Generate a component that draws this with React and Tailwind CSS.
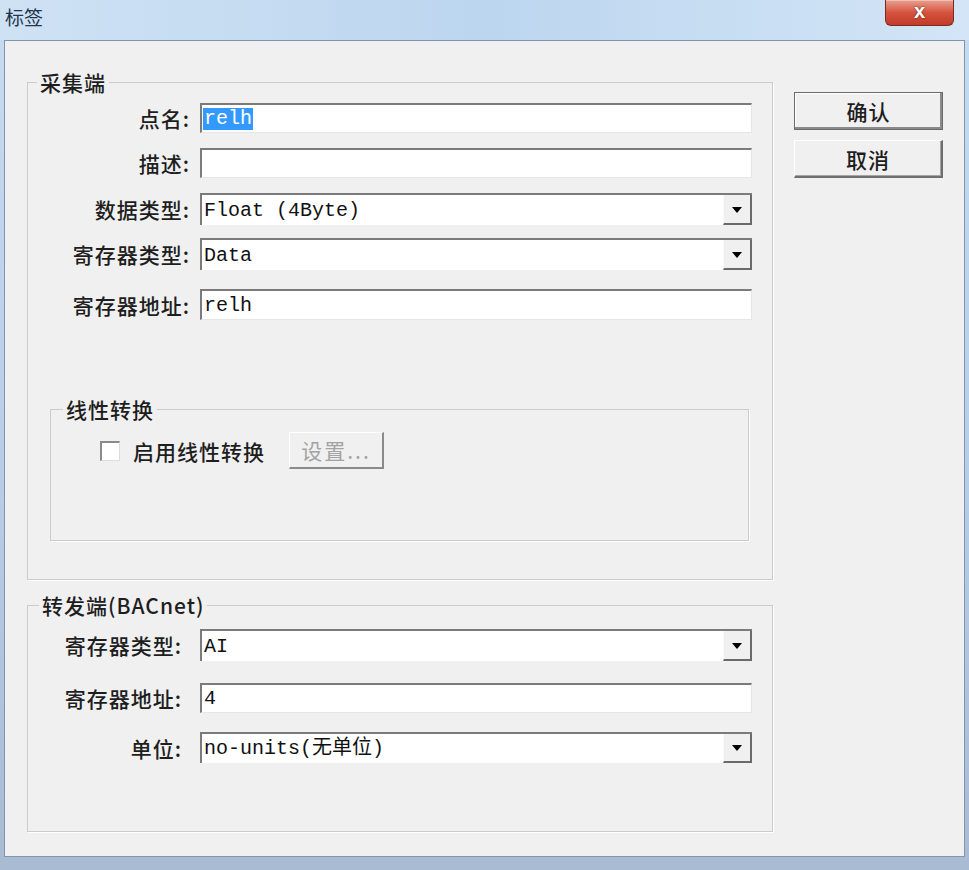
import React from "react";

const cjk = "font-['Noto_Sans_CJK_SC',sans-serif]";
const mono = "font-['Liberation_Mono','Noto_Sans_CJK_SC',monospace]";

// sunken edit box
const Edit = ({ value, selected, h = "h-[30px]" }) => (
  <div
    className={`${h} w-[552px] flex items-center bg-white border-t-2 border-l-2 border-t-[#7b7b7b] border-l-[#7b7b7b] border-r border-b border-r-[#e6e6e6] border-b-[#e6e6e6] pl-[1px] pt-[1px] text-[20px] leading-[24px] text-[#111] ${mono}`}
  >
    {selected ? (
      <span className="bg-[#3399ff] text-white px-[1px] leading-[22px]">{value}</span>
    ) : (
      <span className="px-[1px] whitespace-nowrap">{value}</span>
    )}
  </div>
);

// combo box with drop arrow
const Combo = ({ value, h = "h-[32px]" }) => (
  <div
    className={`${h} w-[552px] flex bg-white border-t-2 border-l-2 border-t-[#7b7b7b] border-l-[#7b7b7b] text-[20px] leading-[24px] text-[#111] ${mono}`}
  >
    <div className="flex-1 flex items-center pl-[2px] pt-[1px] whitespace-nowrap">{value}</div>
    <div className="w-[29px] flex items-center justify-center bg-[#f0f0f0] border-l border-l-[#fafafa] border-r-2 border-b-2 border-r-[#6a6a6a] border-b-[#6a6a6a]">
      <div className="w-0 h-0 border-x-[5px] border-x-transparent border-t-[6px] border-t-black mt-[1px]" />
    </div>
  </div>
);

const Row = ({ label, labelW = "w-[150px]", pr = "pr-[10px]", mt, children }) => (
  <div className={`flex items-center ${mt}`}>
    <div className={`${labelW} ${pr} text-right text-[21px] leading-[24px] tracking-[1px] font-medium text-[#1e1e1e] whitespace-nowrap ${cjk}`}>
      {label}
    </div>
    {children}
  </div>
);

const Group = ({ title, legendMl = "ml-[9px]", className, children }) => (
  <fieldset className={`border border-[#cbcbcb] shadow-[1px_1px_0_#ffffff] p-0 m-0 ${className}`}>
    <legend className={`${legendMl} px-[3px] text-[21px] tracking-[1px] leading-[20px] font-medium text-[#1e1e1e] ${cjk}`}>
      {title}
    </legend>
    {children}
  </fieldset>
);

const App = () => {
  return (
    <div className={`w-[969px] h-[870px] bg-gradient-to-b from-[#c6dcf1] via-[#b9cfe9] to-[#a9bbd3] overflow-hidden leading-[24px] ${cjk}`}>
      {/* title bar */}
      <div className="h-[40px] flex items-start justify-between bg-gradient-to-r from-[#cfe2f4] via-[#bcd6ef] to-[#d3e5f6]">
        <div className="pl-[5px] pt-[5px] text-[19px] leading-[24px] text-[#22354f]">标签</div>
        <div className="mr-[15px] w-[69px] h-[26px] rounded-b-[6px] border border-t-0 border-[#7a2b20] bg-gradient-to-b from-[#e8a08e] via-[#d4533f] to-[#c23b28] flex items-center justify-center shadow-[inset_0_1px_0_#f3c0b4]">
          <span className="text-white text-[20px] font-bold leading-none pb-[3px] font-['Liberation_Sans',sans-serif] [text-shadow:0_0_2px_#5a1a10]">
            x
          </span>
        </div>
      </div>

      {/* client area */}
      <div className="ml-[4px] w-[961px] h-[817px] border border-[#8195b0] bg-[#f0f0f0] flex items-start pl-[22px] pt-[31px]">
        <div className="flex flex-col">
          <Group title="采集端" className="w-[746px] h-[508px]">
            <div className="pl-[22px] flex flex-col">
              <Row label="点名:" mt="mt-[11px]">
                <Edit value="relh" selected />
              </Row>
              <Row label="描述:" mt="mt-[15px]">
                <Edit value="" />
              </Row>
              <Row label="数据类型:" mt="mt-[15px]">
                <Combo value="Float (4Byte)" />
              </Row>
              <Row label="寄存器类型:" mt="mt-[13px]">
                <Combo value="Data" />
              </Row>
              <Row label="寄存器地址:" mt="mt-[19px]">
                <Edit value="relh" h="h-[31px]" />
              </Row>

              <Group title="线性转换" legendMl="ml-[12px]" className="mt-[79px] w-[699px] h-[142px]">
                <div className="flex items-center pl-[49px] mt-[13px]">
                  <div className="w-[20px] h-[20px] bg-white border-t-2 border-l-2 border-t-[#8a8a8a] border-l-[#8a8a8a] border-r border-b border-r-[#dcdcdc] border-b-[#dcdcdc]" />
                  <span className="ml-[13px] text-[21px] leading-[24px] tracking-[1px] font-medium text-[#1e1e1e]">启用线性转换</span>
                  <div className="ml-[24px] w-[95px] h-[37px] flex items-center justify-center bg-[#f0f0f0] border-t border-l border-[#ffffff] border-r-2 border-b-2 border-r-[#8a8a8a] border-b-[#8a8a8a] text-[21px] leading-[24px] tracking-[2px] text-[#a3a3a3]">
                    设置...
                  </div>
                </div>
              </Group>
            </div>
          </Group>

          <Group title="转发端(BACnet)" legendMl="ml-[11px]" className="mt-[15px] w-[746px] h-[237px]">
            <div className="pl-[22px] flex flex-col">
              <Row label="寄存器类型:" pr="pr-[18px]" mt="mt-[14px]">
                <Combo value="AI" />
              </Row>
              <Row label="寄存器地址:" pr="pr-[18px]" mt="mt-[22px]">
                <Edit value="4" />
              </Row>
              <Row label="单位:" pr="pr-[18px]" mt="mt-[19px]">
                <Combo value="no-units(无单位)" h="h-[31px]" />
              </Row>
            </div>
          </Group>
        </div>

        {/* buttons */}
        <div className="ml-[21px] mt-[20px] flex flex-col gap-[10px]">
          <button className="w-[149px] h-[38px] flex items-center justify-center bg-[#f0f0f0] border border-[#6b6b6b] shadow-[inset_-2px_-2px_0_#8a8a8a,inset_1px_1px_0_#ffffff] text-[21px] leading-[24px] tracking-[1px] font-medium text-[#1e1e1e]">
            确认
          </button>
          <button className="w-[149px] h-[38px] flex items-center justify-center bg-[#f0f0f0] border-t border-l border-[#ffffff] border-r-2 border-b-2 border-r-[#6e6e6e] border-b-[#6e6e6e] shadow-[inset_-1px_-1px_0_#a5a5a5] text-[21px] leading-[24px] tracking-[1px] font-medium text-[#1e1e1e]">
            取消
          </button>
        </div>
      </div>
    </div>
  );
};

export default App;
